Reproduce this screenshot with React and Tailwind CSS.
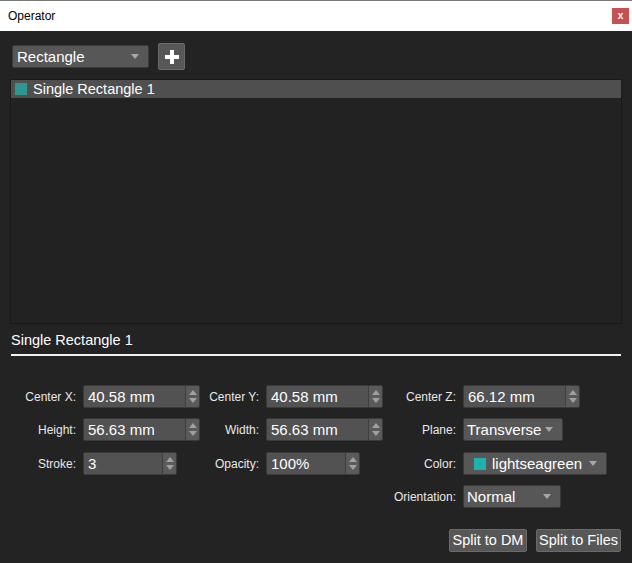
import React from "react";

const Arrow = () => (
  <svg width="8" height="5" viewBox="0 0 8 5" className="shrink-0">
    <path d="M0 0 L8 0 L4 5 Z" fill="#a8a8a8" />
  </svg>
);

const Spin = () => (
  <div className="flex h-full w-[14px] shrink-0 flex-col items-center justify-center gap-[3px] rounded-r-[2px] border-l border-[#3e3e3e] bg-[#5a5a5a]">
    <svg width="8" height="5" viewBox="0 0 8 5">
      <path d="M0 5 L4 0 L8 5 Z" fill="#a0a0a0" />
    </svg>
    <svg width="8" height="5" viewBox="0 0 8 5">
      <path d="M0 0 L8 0 L4 5 Z" fill="#a0a0a0" />
    </svg>
  </div>
);

const Spinner = ({ value, w = "w-[117px]" }) => (
  <div className={`flex h-[23px] ${w} items-stretch rounded-[2px] border border-[#3a3a3a] bg-[#525252]`}>
    <div className="flex flex-1 items-center pl-[4px] text-[15px] leading-none text-white">{value}</div>
    <Spin />
  </div>
);

const Select = ({ children, w }) => (
  <div className={`flex h-[23px] ${w} items-center justify-between rounded-[2px] border border-[#3a3a3a] bg-[#575757] pl-[3px] pr-[9px] text-[15px] leading-none text-white`}>
    <div className="flex items-center">{children}</div>
    <Arrow />
  </div>
);

const Label = ({ children, w }) => (
  <div className={`${w} shrink-0 pr-[7px] text-right text-[12px] text-[#e8e8e8]`}>{children}</div>
);

export default function App() {
  return (
    <div
      className="flex h-[563px] w-[632px] flex-col bg-[#232323]"
      style={{ fontFamily: '"Liberation Sans", Arial, sans-serif' }}
    >
      {/* Title bar */}
      <div className="flex h-[31px] shrink-0 items-center justify-between border-t border-[#7a7a7a] bg-white pl-[8px] pr-[3px]">
        <span className="text-[12px] text-black">Operator</span>
        <div className="flex h-[16px] w-[17px] items-center justify-center bg-[#c75050] text-[10px] font-bold leading-none text-white">
          x
        </div>
      </div>

      <div className="flex flex-1 flex-col px-[10px] pt-[12px]">
        {/* Top row */}
        <div className="flex items-center gap-[9px] pl-[2px]">
          <Select w="w-[137px]">
            <span className="pl-[1px]">Rectangle</span>
          </Select>
          <div className="flex h-[27px] w-[27px] items-center justify-center rounded-[2px] border border-[#6a6a6a] bg-[#575757]">
            <svg width="14" height="14" viewBox="0 0 14 14">
              <path d="M5 0 H9 V5 H14 V9 H9 V14 H5 V9 H0 V5 H5 Z" fill="#ffffff" />
            </svg>
          </div>
        </div>

        {/* List */}
        <div className="mt-[9px] h-[245px] w-[612px] border border-[#1a1a1a] bg-[#222222]">
          <div className="flex h-[18px] items-center bg-[#4f4f4f] pl-[4px]">
            <div className="h-[12px] w-[12px] bg-[#2e9890]" />
            <span className="ml-[6px] text-[14.5px] leading-none text-white">Single Rectangle 1</span>
          </div>
        </div>

        {/* Section header */}
        <div className="mt-[7px] pl-[1px] text-[14.5px] leading-[18px] text-white">Single Rectangle 1</div>
        <div className="ml-[1px] mt-[5px] h-[2px] w-[610px] bg-[#f0f0f0]" />

        {/* Form */}
        <div className="mt-[29px] flex flex-col gap-[10px]">
          <div className="flex items-center">
            <Label w="w-[73px]">Center X:</Label>
            <Spinner value="40.58 mm" />
            <Label w="w-[66px]">Center Y:</Label>
            <Spinner value="40.58 mm" />
            <Label w="w-[80px]">Center Z:</Label>
            <Spinner value="66.12 mm" />
          </div>
          <div className="flex items-center">
            <Label w="w-[73px]">Height:</Label>
            <Spinner value="56.63 mm" />
            <Label w="w-[66px]">Width:</Label>
            <Spinner value="56.63 mm" />
            <Label w="w-[80px]">Plane:</Label>
            <Select w="w-[100px]">Transverse</Select>
          </div>
          <div className="mt-[1px] flex items-center">
            <Label w="w-[73px]">Stroke:</Label>
            <Spinner value="3" w="w-[94px]" />
            <div className="w-[23px] shrink-0" />
            <Label w="w-[66px]">Opacity:</Label>
            <Spinner value="100%" w="w-[94px]" />
            <div className="w-[23px] shrink-0" />
            <Label w="w-[80px]">Color:</Label>
            <Select w="w-[144px]">
              <div className="ml-[7px] h-[12px] w-[12px] bg-[#20b2aa]" />
              <span className="ml-[6px]">lightseagreen</span>
            </Select>
          </div>
          <div className="flex items-center">
            <div className="w-[373px] shrink-0" />
            <Label w="w-[80px]">Orientation:</Label>
            <Select w="w-[98px]">Normal</Select>
          </div>
        </div>

        {/* Buttons */}
        <div className="mt-[21px] flex justify-end gap-[9px] pr-[1px]">
          <div className="flex h-[23px] w-[78px] items-center justify-center rounded-[2px] border border-[#6a6a6a] bg-[#575757] text-[14.5px] leading-none text-white">
            Split to DM
          </div>
          <div className="flex h-[23px] w-[85px] items-center justify-center rounded-[2px] border border-[#6a6a6a] bg-[#575757] text-[14.5px] leading-none text-white">
            Split to Files
          </div>
        </div>
      </div>
    </div>
  );
}
